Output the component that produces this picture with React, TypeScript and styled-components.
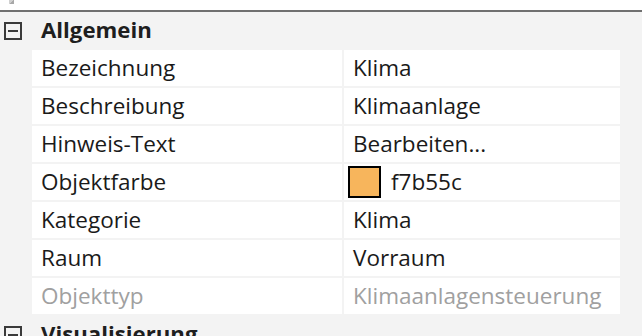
import React from "react";
import styled, { createGlobalStyle } from "styled-components";

const Global = createGlobalStyle`
  html, body { margin: 0; padding: 0; background: #f3f3f3; }
  body { font-family: "Open Sans", "Noto Sans", sans-serif; overflow: hidden; }
`;

const Page = styled.div`
  width: 642px;
  height: 336px;
  overflow: hidden;
  display: flex;
  flex-direction: column;
`;

const TopStrip = styled.div`
  height: 10px;
  background: #ffffff;
  border-bottom: 2px solid #707070;
  position: relative;
  flex: none;
`;

const Nub = styled.span`
  position: absolute;
  left: 9px;
  top: 0;
  width: 5px;
  height: 4px;
  background: linear-gradient(135deg, #d0d0d0 0 50%, #a8a8a8 50% 100%);
`;

const Group = styled.section`
  display: flex;
  flex-direction: column;
`;

const GroupHeader = styled.div`
  box-sizing: border-box;
  height: 38px;
  display: flex;
  align-items: center;
  gap: 19px;
  padding-left: 4px;
`;

const Toggle = styled.span`
  box-sizing: border-box;
  width: 18px;
  height: 18px;
  border: 2px solid #3a3a3a;
  display: flex;
  align-items: center;
  justify-content: center;
  &::after {
    content: "";
    width: 10px;
    height: 2px;
    background: #3a3a3a;
  }
`;

const GroupTitle = styled.span`
  font-weight: 700;
  font-size: 22.2px;
  line-height: 30px;
  color: #1e1e1e;
  margin-top: -3px;
`;

const Rows = styled.div`
  display: grid;
  grid-template-columns: 310px 276px;
  column-gap: 2px;
  row-gap: 2px;
  margin-left: 32px;
`;

const Cell = styled.div<{ $disabled?: boolean }>`
  box-sizing: border-box;
  height: 36px;
  background: #ffffff;
  display: flex;
  align-items: center;
  gap: 10px;
  padding-left: 9px;
  padding-bottom: 2px;
  font-size: 22.5px;
  color: ${(p) => (p.$disabled ? "#a0a0a0" : "#1a1a1a")};
  white-space: nowrap;
  overflow: hidden;
`;

const Swatch = styled.span<{ $color: string }>`
  box-sizing: border-box;
  width: 33px;
  height: 32px;
  border: 2px solid #000;
  background: ${(p) => p.$color};
  flex: none;
  margin-left: -5px;
  margin-bottom: -2px;
`;

const NextGroup = styled.div`
  margin-top: 2px;
`;

type Row = { label: string; value: string; color?: string; disabled?: boolean };

const rows: Row[] = [
  { label: "Bezeichnung", value: "Klima" },
  { label: "Beschreibung", value: "Klimaanlage" },
  { label: "Hinweis-Text", value: "Bearbeiten..." },
  { label: "Objektfarbe", value: "f7b55c", color: "#f7b55c" },
  { label: "Kategorie", value: "Klima" },
  { label: "Raum", value: "Vorraum" },
  { label: "Objekttyp", value: "Klimaanlagensteuerung", disabled: true },
];

export default function App() {
  return (
    <Page>
      <Global />
      <TopStrip>
        <Nub />
      </TopStrip>
      <Group>
        <GroupHeader>
          <Toggle />
          <GroupTitle>Allgemein</GroupTitle>
        </GroupHeader>
        <Rows>
          {rows.map((r) => (
            <React.Fragment key={r.label}>
              <Cell $disabled={r.disabled}>{r.label}</Cell>
              <Cell $disabled={r.disabled}>
                {r.color && <Swatch $color={r.color} />}
                {r.value}
              </Cell>
            </React.Fragment>
          ))}
        </Rows>
      </Group>
      <NextGroup>
        <GroupHeader>
          <Toggle />
          <GroupTitle>Visualisierung</GroupTitle>
        </GroupHeader>
      </NextGroup>
    </Page>
  );
}
